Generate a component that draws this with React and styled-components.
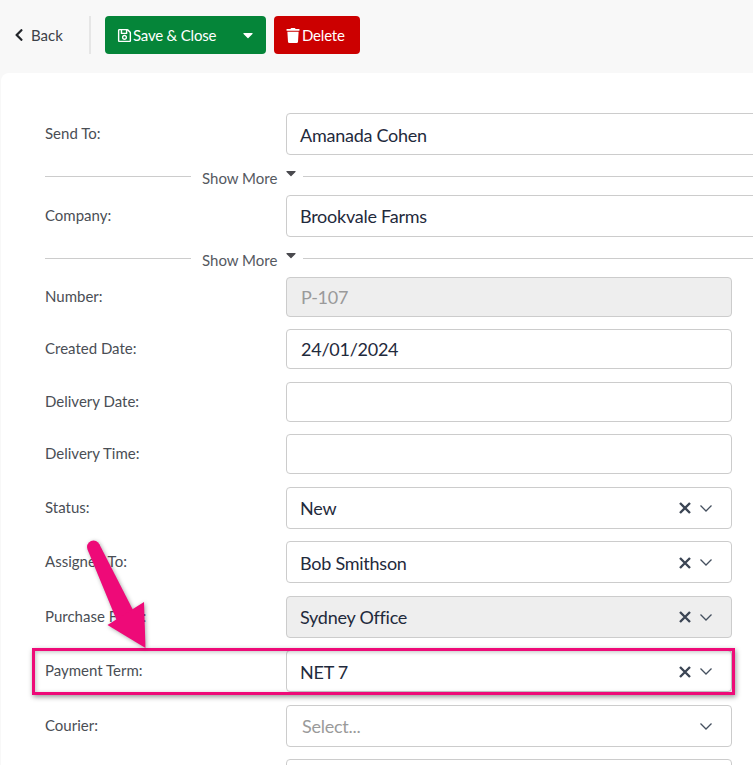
import styled, { createGlobalStyle } from 'styled-components';
import { FaCaretDown, FaChevronLeft, FaRegSave, FaTrash } from 'react-icons/fa';

const GlobalStyle = createGlobalStyle`
  html, body {
    margin: 0;
    height: 765px;
    overflow: hidden;
    background: #f8f8f8;
    font-family: Lato, "Open Sans", sans-serif;
  }
`;

const Page = styled.div`
  position: relative;
  width: 753px;
  height: 765px;
  overflow: hidden;
`;

const Toolbar = styled.div`
  display: flex;
  align-items: center;
  height: 73px;
  box-sizing: border-box;
  padding: 16px 0 19px 14px;
`;

const BackLink = styled.a`
  display: flex;
  align-items: center;
  gap: 7px;
  width: 75px;
  color: #3d4148;
  font-size: 15px;

  svg {
    width: 10px;
    height: 14px;
    color: #23262b;
  }
`;

const Divider = styled.div`
  width: 2px;
  height: 38px;
  background: #e6e6e6;
  margin-right: 14px;
`;

const Button = styled.button`
  display: flex;
  align-items: center;
  height: 38px;
  box-sizing: border-box;
  border: 0;
  border-radius: 4px;
  padding: 0 0 0 12px;
  background: ${(props) => props.$color};
  color: #fff;
  font-family: inherit;
  font-size: 15px;
  letter-spacing: -0.2px;
  white-space: nowrap;
`;

const SaveButton = styled(Button)`
  width: 161px;
  margin-right: 8px;

  svg:first-child {
    width: 15px;
    height: 15px;
    margin-right: 1px;
  }
`;

const Caret = styled(FaCaretDown)`
  width: 16px;
  height: 16px;
  margin-left: 24px;
`;

const DeleteButton = styled(Button)`
  width: 86px;

  svg {
    width: 14px;
    height: 15px;
    margin-right: 2px;
  }
`;

const Card = styled.div`
  display: flex;
  flex-direction: column;
  margin-left: 1px;
  padding: 40px 0 0 44px;
  height: 800px;
  box-sizing: border-box;
  background: #fff;
  border-radius: 8px 0 0 0;
`;

const Row = styled.div`
  display: grid;
  grid-template-columns: 241px ${(props) => (props.$wide ? '480px' : '446px')};
  align-items: center;
  margin-bottom: ${(props) => (props.$tight ? 0 : 12.5)}px;
`;

const Label = styled.label`
  color: #4a4e55;
  font-size: 15px;
  margin-top: -2px;
`;

const Field = styled.div`
  display: flex;
  align-items: center;
  height: ${(props) => (props.$tall ? 42 : 40)}px;
  box-sizing: border-box;
  padding: ${(props) => (props.$tall ? 1 : 0)}px 13px 0 ${(props) => (props.$tall ? 13 : 14)}px;
  border: 1px solid #cccccc;
  border-radius: 4px;
  background: ${(props) => (props.$disabled ? '#eeeeee' : '#fff')};
  color: #1f2a3c;
  font-size: 18px;
  letter-spacing: -0.25px;
`;

const Value = styled.span`
  flex: 1;
  color: ${(props) => props.$color || 'inherit'};
  margin-left: ${(props) => (props.$select ? 2 : 0)}px;
`;

const Clear = styled.svg`
  flex: none;
  width: 14px;
  height: 14px;
  margin-right: 7px;
  color: #3b4554;
`;

const Chevron = styled.svg`
  flex: none;
  width: 14px;
  height: 9px;
  margin-right: 5px;
  color: #45505f;
`;

const MoreRow = styled.div`
  display: flex;
  align-items: center;
  height: 39.875px;
  color: #55595f;
  font-size: 15px;
  white-space: nowrap;
`;

const MoreLine = styled.div`
  flex: none;
  height: 1px;
  background: #cccccc;
  width: ${(props) => props.$width}px;
  margin-top: 4px;
`;

const MoreText = styled.span`
  margin: 6px 6px 0 11px;
`;

const MoreCaret = styled(FaCaretDown)`
  flex: none;
  width: 16px;
  height: 16px;
  margin: -3px 4px 0 0;
  color: #4a4a4f;
`;

const Highlight = styled.div`
  position: absolute;
  left: 32px;
  top: 648px;
  width: 703px;
  height: 47px;
  box-sizing: border-box;
  border: 3px solid #ee0a78;
  box-shadow: 1px 2px 5px rgba(0, 0, 0, 0.4), inset 1px 1px 4px rgba(0, 0, 0, 0.25);
`;

const Arrow = styled.svg`
  position: absolute;
  left: 0;
  top: 0;
  filter: drop-shadow(1px 1px 2px rgba(0, 0, 0, 0.35));
`;

const SelectField = ({ value, disabled, clearable = true, placeholder }) => (
  <Field $tall $disabled={disabled}>
    <Value $color={placeholder ? '#9a9a9a' : undefined} $select={placeholder}>
      {value}
    </Value>
    {clearable && (
      <Clear viewBox="0 0 14 14">
        <path d="M2 2l10 10M12 2L2 12" stroke="currentColor" strokeWidth="2.4" fill="none" />
      </Clear>
    )}
    <Chevron viewBox="0 0 14 9">
      <path d="M1.500 1.500L7 7l5.500-5.500" stroke="currentColor" strokeWidth="1.3" fill="none" />
    </Chevron>
  </Field>
);

const ShowMore = () => (
  <MoreRow>
    <MoreLine $width={146} />
    <MoreText>Show More</MoreText>
    <MoreCaret />
    <MoreLine $width={460} />
  </MoreRow>
);

export default function App() {
  return (
    <Page>
      <GlobalStyle />
      <Toolbar>
        <BackLink>
          <FaChevronLeft />
          Back
        </BackLink>
        <Divider />
        <SaveButton $color="#058539">
          <FaRegSave />
          Save &amp; Close
          <Caret />
        </SaveButton>
        <DeleteButton $color="#cc0000">
          <FaTrash />
          Delete
        </DeleteButton>
      </Toolbar>

      <Card>
        <Row $wide $tight>
          <Label>Send To:</Label>
          <Field $tall>Amanada Cohen</Field>
        </Row>
        <ShowMore />
        <Row $wide $tight>
          <Label>Company:</Label>
          <Field $tall>Brookvale Farms</Field>
        </Row>
        <ShowMore />
        <Row>
          <Label>Number:</Label>
          <Field $disabled>
            <Value $color="#9a9a9a">P-107</Value>
          </Field>
        </Row>
        <Row>
          <Label>Created Date:</Label>
          <Field>24/01/2024</Field>
        </Row>
        <Row>
          <Label>Delivery Date:</Label>
          <Field />
        </Row>
        <Row>
          <Label>Delivery Time:</Label>
          <Field />
        </Row>
        <Row>
          <Label>Status:</Label>
          <SelectField value="New" />
        </Row>
        <Row>
          <Label>Assigned To:</Label>
          <SelectField value="Bob Smithson" />
        </Row>
        <Row>
          <Label>Purchase From:</Label>
          <SelectField value="Sydney Office" disabled />
        </Row>
        <Row>
          <Label>Payment Term:</Label>
          <SelectField value="NET 7" />
        </Row>
        <Row>
          <Label>Courier:</Label>
          <SelectField value="Select..." clearable={false} placeholder />
        </Row>
        <Row>
          <Label />
          <Field $tall />
        </Row>
      </Card>

      <Highlight />
      <Arrow width="753" height="765" viewBox="0 0 753 765">
        <circle cx="93.500" cy="547" r="6.500" fill="#ee0a78" />
        <path d="M87.500 549.500L117 621L133 610L99.500 544.500Z" fill="#ee0a78" />
        <path d="M107.500 625L144 602L145.500 648Z" fill="#ee0a78" />
      </Arrow>
    </Page>
  );
}
